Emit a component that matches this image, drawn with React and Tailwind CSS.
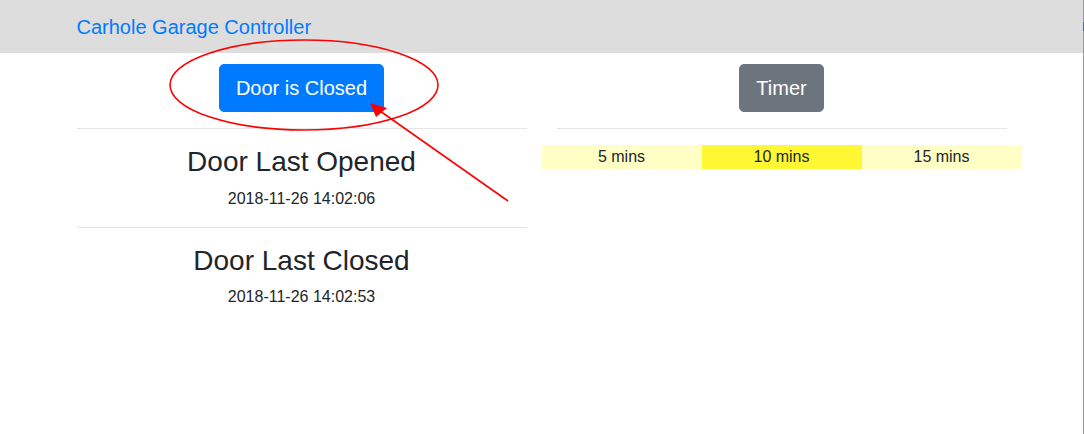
import React, { useState } from "react";

const timers = [5, 10, 15];

const App = () => {
  const [selected, setSelected] = useState(10);

  return (
    <div
      className="relative flex min-h-[434px] w-full bg-white text-[#212529]"
      style={{ fontFamily: '"Liberation Sans", Arial, sans-serif' }}
    >
      <div className="flex-1">
        {/* Navbar */}
        <div className="h-[53px] bg-[#dddddd]">
          <div className="mx-auto flex h-full w-[960px] items-center px-[15px]">
            <a href="#" className="text-[20px] leading-[30px] text-[#007bff]">
              Carhole Garage Controller
            </a>
          </div>
        </div>

        <div className="mx-auto flex w-[960px] pt-[11px]">
          {/* Door column */}
          <div className="w-1/2 px-[15px] text-center">
            <button className="rounded-[5px] border border-[#007bff] bg-[#007bff] px-4 py-2 text-[20px] leading-[30px] text-white">
              Door is Closed
            </button>
            <hr className="my-4 border-t border-[#e5e5e5]" />
            <h3 className="mb-2 text-[28px] leading-[1.2]">Door Last Opened</h3>
            <p className="mb-4 text-[16px] leading-6">2018-11-26 14:02:06</p>
            <hr className="my-4 border-t border-[#e5e5e5]" />
            <h3 className="mb-2 text-[28px] leading-[1.2]">Door Last Closed</h3>
            <p className="mb-4 text-[16px] leading-6">2018-11-26 14:02:53</p>
          </div>

          {/* Timer column */}
          <div className="w-1/2 px-[15px] text-center">
            <button className="rounded-[5px] border border-[#6c757d] bg-[#6c757d] px-4 py-2 text-[20px] leading-[30px] text-white">
              Timer
            </button>
            <hr className="my-4 border-t border-[#e5e5e5]" />
            <div className="-mx-[15px] flex">
              {timers.map((t) => (
                <div
                  key={t}
                  onClick={() => setSelected(t)}
                  className={
                    t === selected
                      ? "flex-1 cursor-pointer bg-[#fff832] text-[16px] leading-6"
                      : "flex-1 cursor-pointer bg-[#ffffc6] text-[16px] leading-6"
                  }
                >
                  {t} mins
                </div>
              ))}
            </div>
          </div>
        </div>
      </div>

      {/* window edge */}
      <div className="relative w-px bg-[#9a9a9a]">
        <div className="absolute left-0 top-[22px] h-[9px] w-px bg-[#3b6ea8]" />
      </div>

      {/* red annotation */}
      <svg
        className="pointer-events-none absolute left-0 top-0"
        width="1084"
        height="434"
        viewBox="0 0 1084 434"
      >
        <ellipse cx="304" cy="85" rx="134" ry="45" fill="none" stroke="#ff0000" strokeWidth="1.6" />
        <line x1="508" y1="201" x2="380" y2="111" stroke="#ff0000" strokeWidth="1.6" />
        <polygon points="370,103 376,117 387,108" fill="#ff0000" />
      </svg>
    </div>
  );
};

export default App;
